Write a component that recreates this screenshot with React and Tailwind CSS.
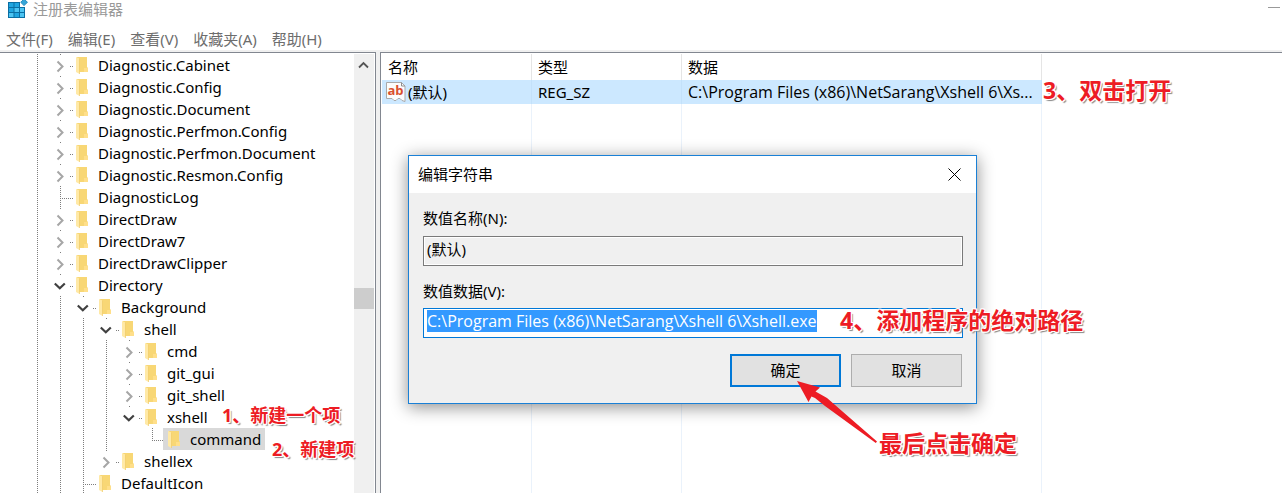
import { useEffect, useRef } from "react";

/* Guide codes: "|" line, "t" tee, "l" elbow, ">" collapsed, "v" expanded, " " blank */
const TREE = [
  ["|>", "Diagnostic.Cabinet"],
  ["|>", "Diagnostic.Config"],
  ["|>", "Diagnostic.Document"],
  ["|>", "Diagnostic.Perfmon.Config"],
  ["|>", "Diagnostic.Perfmon.Document"],
  ["|>", "Diagnostic.Resmon.Config"],
  ["|t", "DiagnosticLog"],
  ["|>", "DirectDraw"],
  ["|>", "DirectDraw7"],
  ["|>", "DirectDrawClipper"],
  ["|v", "Directory"],
  ["||v", "Background"],
  ["|||v", "shell"],
  ["||||>", "cmd"],
  ["||||>", "git_gui"],
  ["||||>", "git_shell"],
  ["||||v", "xshell"],
  ["|||| l", "command", true],
  ["|||>", "shellex"],
  ["||t", "DefaultIcon"],
];

const MENUS = ["文件(F)", "编辑(E)", "查看(V)", "收藏夹(A)", "帮助(H)"];

function Guide({ kind }) {
  const dots = { stroke: "#7d7d7d", strokeDasharray: "1 1", shapeRendering: "crispEdges", fill: "none" };
  return (
    <svg className="h-[22px] w-[23px] shrink-0 overflow-visible" viewBox="0 0 23 22" aria-hidden="true">
      {(kind === "|" || kind === "t") && <path d="M12.5 0V22" {...dots} />}
      {kind === "l" && <path d="M12.5 0V12" {...dots} />}
      {(kind === "t" || kind === "l") && <path d="M12 12.5H25" {...dots} />}
      {(kind === ">" || kind === "v") && (
        <>
          <path d="M12.5 0V1" {...dots} />
          <path d="M22 12.5H25" {...dots} />
        </>
      )}
      {kind === ">" && <path d="M9.5 7.5L14.5 12.5L9.5 17.5" fill="none" stroke="#a6a6a6" strokeWidth="2" />}
      {kind === "v" && <path d="M6.8 9.5L11.8 14.3L16.8 9.5" fill="none" stroke="#404040" strokeWidth="2.2" />}
    </svg>
  );
}

function Folder() {
  return (
    <svg className="h-[22px] w-[23px] shrink-0" viewBox="0 0 23 22" aria-hidden="true">
      <path d="M6 3H16V13L17 14V18H6Z" fill="#f8d775" />
      <path d="M13 14H17V18H13Z" fill="#ffdf8a" />
      <path d="M5 3L8.500 4.500V20L5 18Z" fill="#ffe9a6" />
      <path d="M8.500 4.500V20" stroke="#efca68" strokeWidth="0.7" />
    </svg>
  );
}

function RegeditLogo() {
  return (
    <svg className="h-[20px] w-[20px]" viewBox="0 0 20 20" aria-hidden="true">
      <path d="M0 2H12V7H17V18H0Z" fill="#0a6ea3" />
      <path d="M1 3H5.500V7H1ZM6.500 3H11V7H6.500ZM1 8H5.500V12H1ZM6.500 13H11V17H6.500Z" fill="#1fa5e0" />
      <path d="M6.500 8H11V12H6.500ZM1 13H5.500V17H1ZM12 8H16V12H12ZM12 13H16V17H12Z" fill="#4cc4f2" />
      <path d="M16 -1L19.500 2.300L16 5.600L12.700 2.300Z" fill="#35a5d8" stroke="#1280b5" strokeWidth="0.8" />
    </svg>
  );
}

function StringIcon() {
  return (
    <svg className="h-[20px] w-[20px] shrink-0" viewBox="0 0 20 20" aria-hidden="true">
      <path d="M.5.5H15.500L19 4V19.500L16 18.500L14 16.500H12L10 18.500H8L6 16.500H.5Z" fill="#fcfcfc" stroke="#a9a9a9" />
      <path d="M15.500.5V4H19" fill="none" stroke="#8f8f8f" />
      <text x="9.500" y="13" textAnchor="middle" fontSize="13" fontWeight="700" fontFamily="Open Sans, sans-serif" fill="#d9502e">
        ab
      </text>
    </svg>
  );
}

const OUTLINE =
  "absolute font-bold whitespace-nowrap text-[#ed1c24] [text-shadow:1px_0_#fff,-1px_0_#fff,0_1px_#fff,0_-1px_#fff,1px_1px_#fff,-1px_-1px_#fff,1px_-1px_#fff,-1px_1px_#fff,2px_2px_1px_#888]";

function EditDialog() {
  const field = useRef(null);
  useEffect(() => {
    field.current.focus();
    field.current.select();
  }, []);
  return (
    <section
      role="dialog"
      aria-labelledby="dialog-title"
      className="absolute top-[155px] left-[408px] w-[569px] border border-[#1a80d6] bg-[#f0f0f0] shadow-[0_3px_16px_rgba(0,0,0,0.45)]"
    >
      <header className="flex h-[37px] items-center justify-between bg-white pr-[14px] pl-[9px]">
        <h2 id="dialog-title" className="pb-[2px]">编辑字符串</h2>
        <button type="button" aria-label="关闭" className="p-px">
          <svg className="size-[13px]" viewBox="0 0 13 13" aria-hidden="true">
            <path d="M.5.5L12.500 12.500M12.500.5L.5 12.500" stroke="#000" strokeWidth="1" />
          </svg>
        </button>
      </header>
      <form className="flex flex-col pt-[14px] pr-[13px] pb-4 pl-[14px]" onSubmit={(e) => e.preventDefault()}>
        <label htmlFor="value-name" className="leading-[22px]">数值名称(N):</label>
        <input
          id="value-name"
          readOnly
          defaultValue="(默认)"
          className="mt-[7px] h-[30px] border border-[#7a7a7a] bg-[#f0f0f0] px-[3px] pb-[5px] shadow-[inset_0_0_0_1px_#fff] outline-none"
        />
        <label htmlFor="value-data" className="mt-[14px] leading-[22px]">数值数据(V):</label>
        <input
          id="value-data"
          ref={field}
          defaultValue="C:\Program Files (x86)\NetSarang\Xshell 6\Xshell.exe"
          className="mt-[6px] h-[30px] border border-[#0078d7] bg-white px-[3px] pb-1 font-['Open_Sans',sans-serif] text-[16px] outline-none selection:bg-[#3399ff] selection:text-white"
        />
        <div className="mt-4 flex justify-end gap-[10px] pr-px">
          <button type="submit" className="h-[33px] w-[111px] border-2 border-[#0078d7] bg-[#e1e1e1] pb-[2px]">确定</button>
          <button type="button" className="h-[33px] w-[111px] border border-[#adadad] bg-[#e1e1e1] pb-[2px]">取消</button>
        </div>
      </form>
    </section>
  );
}

export default function App() {
  return (
    <div className="relative flex h-screen flex-col overflow-hidden bg-white font-['Noto_Sans','Noto_Sans_CJK_SC',sans-serif] text-[15px] leading-[22px] text-black">
      <header className="flex h-[26px] items-start justify-between pl-2">
        <div className="flex items-start gap-[5px]">
          <RegeditLogo />
          <h1 className="leading-[18px] text-[#999]">注册表编辑器</h1>
        </div>
        <button type="button" aria-label="最小化" className="pt-[7px] pr-[2px]">
          <span className="block h-px w-3 bg-[#999]" />
        </button>
      </header>
      <nav className="flex h-6 items-center gap-[15px] pt-[2px] pl-[6px] text-[#6d6d6d]">
        {MENUS.map((m) => (
          <button type="button" key={m}>{m}</button>
        ))}
      </nav>
      <main className="flex min-h-0 flex-1 gap-1 bg-[#f0f0f0] pt-[2px]">
        <div className="flex w-[376px] shrink-0 border-t border-r border-[#828790] bg-white pt-px">
          <ul role="tree" className="min-w-0 flex-1 overflow-hidden pl-[25px]">
            {TREE.map(([guides, name, selected]) => (
              <li key={name} role="treeitem" aria-selected={!!selected} className="flex h-[22px]">
                {guides.split("").map((g, i) => (
                  <Guide key={i} kind={g} />
                ))}
                <span className={selected ? "flex bg-[#d9d9d9] pr-1" : "flex pr-1"}>
                  <Folder />
                  <span className="pl-1">{name}</span>
                </span>
              </li>
            ))}
          </ul>
          <div className="mr-px flex w-5 flex-col items-center bg-[#f0f0f0]">
            <svg className="h-[22px] w-5" viewBox="0 0 20 22" aria-hidden="true">
              <path d="M5 13.500L9.500 9L14 13.500" fill="none" stroke="#555" strokeWidth="1.800" />
            </svg>
            <div className="mt-[212px] h-[21px] w-full bg-[#cdcdcd]" />
          </div>
        </div>
        <div className="min-w-0 flex-1 border-t border-l border-[#828790] bg-white pt-px pl-px">
          <table className="h-full w-[660px] table-fixed border-separate border-spacing-0 text-left">
            <thead>
              <tr className="h-[26px]">
                <th className="w-[150px] border-r border-[#e5e5e5] p-0 pl-[6px] font-normal">名称</th>
                <th className="w-[150px] border-r border-[#e5e5e5] p-0 pl-[6px] font-normal">类型</th>
                <th className="border-r border-[#e5e5e5] p-0 pl-[6px] font-normal">数据</th>
              </tr>
            </thead>
            <tbody>
              <tr className="h-6 bg-[#cce8ff]">
                <td className="border-r border-[#c3e1fa] p-0 pl-1">
                  <div className="flex items-center gap-[2px]">
                    <StringIcon />
                    (默认)
                  </div>
                </td>
                <td className="border-r border-[#c3e1fa] p-0 pl-[6px]">REG_SZ</td>
                <td className="border-r border-[#c3e1fa] p-0 pl-[6px] font-['Open_Sans',sans-serif] text-[16px] whitespace-nowrap">
                  C:\Program Files (x86)\NetSarang\Xshell 6\Xs...
                </td>
              </tr>
              <tr aria-hidden="true">
                <td className="h-full border-r border-[#eaf2fb] p-0" />
                <td className="h-full border-r border-[#eaf2fb] p-0" />
                <td className="h-full border-r border-[#eaf2fb] p-0" />
              </tr>
            </tbody>
          </table>
        </div>
      </main>

      <EditDialog />

      <p className={`${OUTLINE} top-[404px] left-[222px] text-[18px]`}>1、新建一个项</p>
      <p className={`${OUTLINE} top-[438px] left-[272px] text-[18px]`}>2、新建项</p>
      <p className={`${OUTLINE} top-[79px] left-[1043px] text-[23px]`}>3、双击打开</p>
      <p className={`${OUTLINE} top-[309px] left-[840px] text-[23px]`}>4、添加程序的绝对路径</p>
      <p className={`${OUTLINE} top-[432px] left-[879px] text-[23px]`}>最后点击确定</p>
      <svg className="absolute top-[381px] left-[797px] h-[64px] w-[82px]" viewBox="0 0 82 64" aria-hidden="true">
        <path d="M0 0L23 6.500L18.500 10.500L30 17L80 60.500L78.800 62L28 25L18 17L14.500 15.500L11.500 21Z" fill="#ed1c24" />
      </svg>
    </div>
  );
}
